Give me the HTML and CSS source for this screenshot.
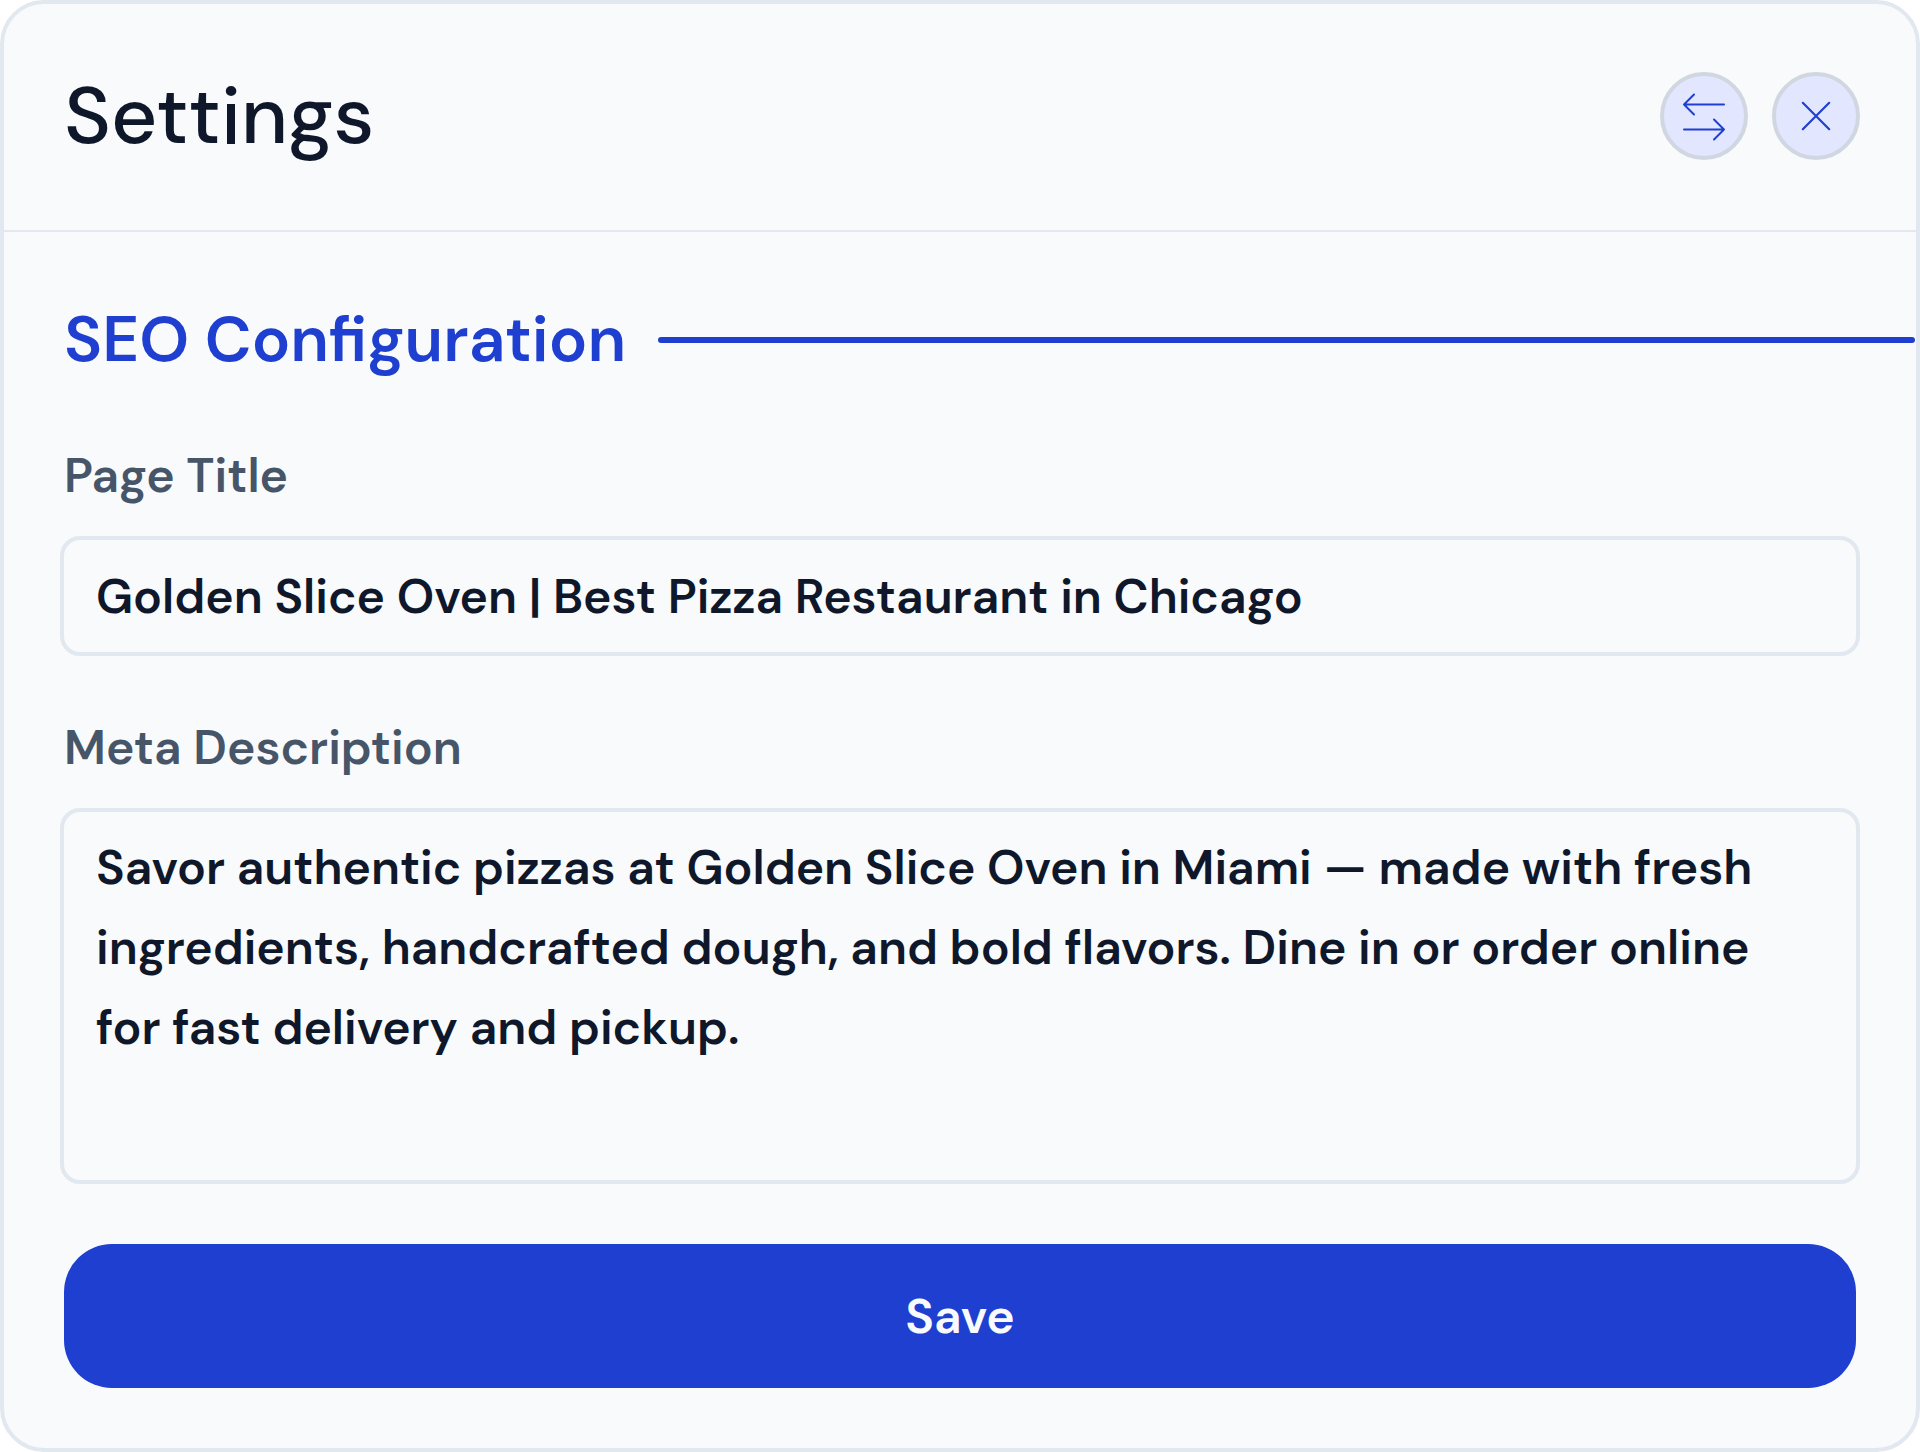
FILE: index.html
```html
<!DOCTYPE html>
<html lang="en">
<head>
    <meta charset="UTF-8">
    <meta name="viewport" content="width=device-width, initial-scale=1.0">
    <title>Settings</title>
    <link rel="stylesheet" href="styles.css">
</head>
<body>

    <main class="settings-panel">
        <!-- Header -->
        <header class="panel-header">
            <h1>Settings</h1>
            <div class="header-actions">
                <button type="button" class="icon-btn" aria-label="Switch side">
                    <svg viewBox="0 0 48 48" stroke-width="2">
                        <path d="M44 12.5H4M14 2.5L4 12.5L14 22.5"/>
                        <path d="M4 37.5H44M34 27.5L44 37.5L34 47.5"/>
                    </svg>
                </button>
                <button type="button" class="icon-btn" aria-label="Close">
                    <svg viewBox="0 0 48 48" stroke-width="2.2">
                        <path d="M10.8 10.8L37.2 37.2M37.2 10.8L10.8 37.2"/>
                    </svg>
                </button>
            </div>
        </header>

        <!-- SEO settings -->
        <h2 class="section-title">SEO Configuration</h2>

        <form class="settings-form">
            <div class="field">
                <label for="page-title">Page Title</label>
                <input type="text" id="page-title" value="Golden Slice Oven | Best Pizza Restaurant in Chicago">
            </div>
            <div class="field">
                <label for="meta-description">Meta Description</label>
                <textarea id="meta-description" spellcheck="false">Savor authentic pizzas at Golden Slice Oven in Miami — made with fresh ingredients, handcrafted dough, and bold flavors. Dine in or order online for fast delivery and pickup.</textarea>
            </div>
            <button type="submit" class="save-btn">Save</button>
        </form>
    </main>

</body>
</html>
```
FILE: styles.css
```css
* {
    box-sizing: border-box;
}
body {
    margin: 0;
    background-color: #fff;
    color: #0f172a;
    font-family: 'DM Sans', Inter, sans-serif;
}
.settings-panel {
    min-height: 100vh;
    background-color: #f8fafc;
    border: 4px solid #e2e8f0;
    border-radius: 44px;
}

/* Header */
.panel-header {
    display: flex;
    align-items: center;
    justify-content: space-between;
    height: 228px;
    padding: 0 56px 2px 60px;
    border-bottom: 2px solid #e2e8f0;
}
.panel-header h1 {
    margin: 0;
    font-size: 80px;
    font-weight: 500;
}
.header-actions {
    display: flex;
    gap: 24px;
}
.icon-btn {
    display: flex;
    align-items: center;
    justify-content: center;
    width: 88px;
    height: 88px;
    padding: 0;
    background-color: #e2e6ff;
    border: 4px solid #d1d7e0;
    border-radius: 50%;
    cursor: pointer;
}
.icon-btn svg {
    width: 48px;
    height: 48px;
    overflow: visible;
    fill: none;
    stroke: #1e3fd0;
    stroke-linecap: round;
    stroke-linejoin: round;
}

/* Section title with a rule running to the edge */
.section-title {
    display: flex;
    align-items: center;
    gap: 32px;
    margin: 64px 1px 60px 60px;
    color: #1e3fd0;
    font-size: 64px;
    font-weight: 600;
    line-height: 88px;
}
.section-title::after {
    content: "";
    flex: 1;
    height: 6px;
    background-color: #1e3fd0;
    border-radius: 3px;
}

/* Form */
.settings-form {
    display: flex;
    flex-direction: column;
    gap: 60px;
    padding: 0 56px 60px;
}
.field {
    display: flex;
    flex-direction: column;
    gap: 28px;
}
.field label {
    padding: 0 4px;
    color: #475569;
    font-size: 48px;
    font-weight: 600;
    line-height: 64px;
}
.field input,
.field textarea {
    width: 100%;
    padding: 16px 32px;
    background-color: transparent;
    border: 4px solid #e2e8f0;
    border-radius: 20px;
    color: #0f172a;
    font-family: inherit;
    font-size: 48px;
    font-weight: 600;
    line-height: 80px;
    outline: none;
}
.field input {
    height: 120px;
}
.field textarea {
    display: block;
    height: 376px;
    resize: none;
}
.save-btn {
    height: 144px;
    margin: 0 4px;
    background-color: #1e3fd0;
    border: none;
    border-radius: 48px;
    color: #f8fafc;
    font-family: inherit;
    font-size: 48px;
    font-weight: 600;
    cursor: pointer;
}
```
